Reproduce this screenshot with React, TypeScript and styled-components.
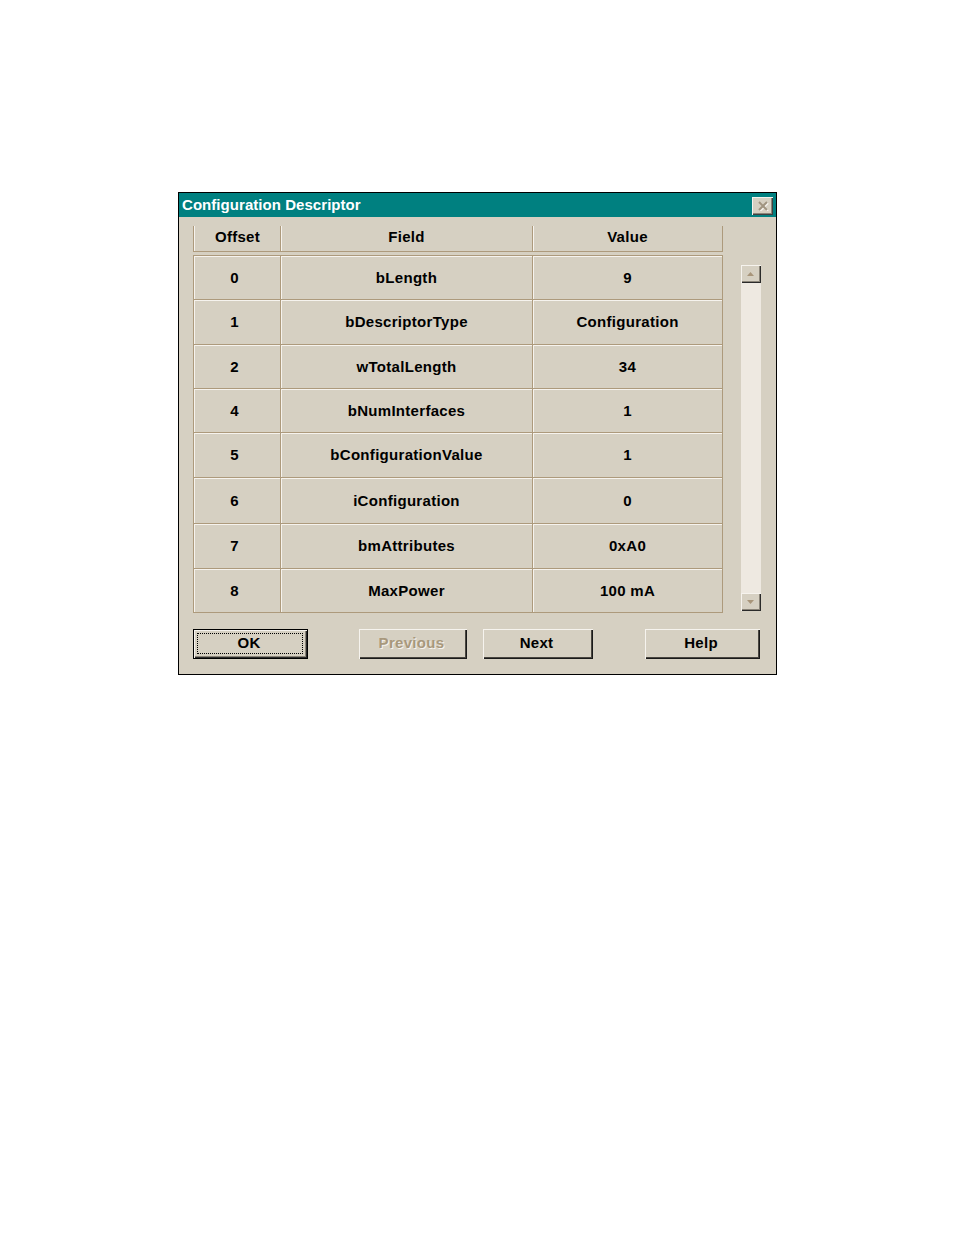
import React from "react";
import styled, { createGlobalStyle, css } from "styled-components";

const BG = "#d6d0c2";
const LIGHT = "#f6f3ee";
const GRID = "#ad9a7c";
const TEAL = "#008080";

const Global = createGlobalStyle`
  html, body { margin: 0; padding: 0; background: #ffffff; }
  body { font-family: "Liberation Sans", Arial, sans-serif; }
`;

const Page = styled.div`
  padding: 192px 0 0 178px;
  min-height: 1235px;
  box-sizing: border-box;
`;

const Dialog = styled.div`
  width: 599px;
  height: 483px;
  box-sizing: border-box;
  border: 1px solid #000;
  background: ${BG};
  display: flex;
  flex-direction: column;
  font: bold 15px "Liberation Sans", Arial, sans-serif;
  letter-spacing: 0.3px;
  color: #000;
`;

const TitleBar = styled.div`
  height: 24px;
  background: ${TEAL};
  color: #fff;
  display: flex;
  align-items: center;
  justify-content: space-between;
  padding: 0 3px 0 3px;
  box-sizing: border-box;
`;

const Title = styled.span`
  line-height: 1;
  letter-spacing: 0.05px;
  margin-top: -1px;
`;

const CloseBtn = styled.div`
  width: 21px;
  height: 18px;
  box-sizing: border-box;
  background: ${BG};
  box-shadow: inset 1px 1px 0 ${LIGHT}, inset -1px -1px 0 #404040, inset -2px -2px 0 #8a8478;
  display: flex;
  align-items: center;
  justify-content: center;
  margin-top: 1px;
`;

const Body = styled.div`
  flex: 1;
  padding: 9px 0 0 14px;
  display: flex;
  flex-direction: column;
`;

const Content = styled.div`
  display: flex;
  align-items: flex-start;
`;

const Table = styled.div`
  width: 530px;
  display: flex;
  flex-direction: column;
`;

const COLS = "87px 252px 190px";

const HeaderRow = styled.div`
  display: grid;
  grid-template-columns: ${COLS};
  height: 26px;
  border-left: 1px solid ${GRID};
  border-bottom: 1px solid ${GRID};
  box-sizing: border-box;
  margin-bottom: 3px;
`;

const HeaderCell = styled.div<{ $first?: boolean }>`
  display: flex;
  align-items: center;
  justify-content: center;
  border-right: 1px solid ${GRID};
  box-shadow: inset 1px 0 0 ${LIGHT};
  padding-bottom: 5px;
  padding-left: ${(p) => (p.$first ? "1px" : "0")};
`;

const Rows = styled.div`
  border-top: 1px solid ${GRID};
  border-left: 1px solid ${GRID};
  display: flex;
  flex-direction: column;
`;

const Row = styled.div<{ $h: number }>`
  display: grid;
  grid-template-columns: ${COLS};
  height: ${(p) => p.$h}px;
`;

const Cell = styled.div<{ $first?: boolean }>`
  display: flex;
  align-items: center;
  justify-content: center;
  border-right: 1px solid ${GRID};
  border-bottom: 1px solid ${GRID};
  box-shadow: inset 1px 1px 0 ${LIGHT};
  padding-right: ${(p) => (p.$first ? "5px" : "0")};
  padding-bottom: 1px;
`;

const Scrollbar = styled.div`
  margin-left: 18px;
  margin-top: 39px;
  width: 20px;
  height: 346px;
  background: #eee9e1;
  display: flex;
  flex-direction: column;
  justify-content: space-between;
`;

const ScrollBtn = styled.div`
  width: 20px;
  height: 18px;
  box-sizing: border-box;
  background: ${BG};
  box-shadow: inset 1px 1px 0 ${LIGHT}, inset -1px -1px 0 #2a2a2a, inset -2px -2px 0 #8a8478;
  display: flex;
  align-items: center;
  justify-content: center;
  padding: 0 1px 1px 0;
`;

const Buttons = styled.div`
  display: flex;
  margin-top: 16px;
  align-items: flex-start;
`;

const Button = styled.div<{ $w: number; $ml: number; $disabled?: boolean; $default?: boolean }>`
  width: ${(p) => p.$w}px;
  height: 30px;
  margin-left: ${(p) => p.$ml}px;
  box-sizing: border-box;
  background: ${BG};
  display: flex;
  align-items: center;
  justify-content: center;
  position: relative;
  color: ${(p) => (p.$disabled ? "#a8987c" : "#000")};
  text-shadow: ${(p) => (p.$disabled ? `1px 1px 0 ${LIGHT}` : "none")};
  padding: 0 3px 3px 0;
  ${(p) =>
    p.$default
      ? css`
          border: 1px solid #000;
          box-shadow: inset 1px 1px 0 ${LIGHT}, inset -1px -1px 0 #2a2a2a, inset -2px -2px 0 #8a8478;
        `
      : css`
          box-shadow: inset 1px 1px 0 ${LIGHT}, inset -1px -1px 0 #1a1a1a, inset -2px -2px 0 #4a4640;
        `}
`;

const Focus = styled.span`
  position: absolute;
  inset: 3px 4px 4px 3px;
  border: 1px dotted #000;
  pointer-events: none;
`;

const rows: { off: string; field: string; value: string; h: number }[] = [
  { off: "0", field: "bLength", value: "9", h: 44 },
  { off: "1", field: "bDescriptorType", value: "Configuration", h: 45 },
  { off: "2", field: "wTotalLength", value: "34", h: 44 },
  { off: "4", field: "bNumInterfaces", value: "1", h: 44 },
  { off: "5", field: "bConfigurationValue", value: "1", h: 45 },
  { off: "6", field: "iConfiguration", value: "0", h: 46 },
  { off: "7", field: "bmAttributes", value: "0xA0", h: 45 },
  { off: "8", field: "MaxPower", value: "100 mA", h: 44 },
];

const UpArrow = () => (
  <svg width="7" height="4" viewBox="0 0 7 4">
    <path d="M3.5 0 L7 4 L0 4 Z" fill="#a8957a" />
  </svg>
);

const DownArrow = () => (
  <svg width="7" height="4" viewBox="0 0 7 4">
    <path d="M0 0 L7 0 L3.5 4 Z" fill="#a8957a" />
  </svg>
);

const CloseGlyph = () => (
  <svg width="12" height="10" viewBox="0 0 12 10">
    <path d="M2 1 L10 9 M10 1 L2 9" stroke={LIGHT} strokeWidth="2" transform="translate(1 1)" />
    <path d="M2 1 L10 9 M10 1 L2 9" stroke="#a09480" strokeWidth="2" />
  </svg>
);

export default function App() {
  return (
    <>
      <Global />
      <Page>
        <Dialog>
          <TitleBar>
            <Title>Configuration Descriptor</Title>
            <CloseBtn>
              <CloseGlyph />
            </CloseBtn>
          </TitleBar>
          <Body>
            <Content>
              <Table>
                <HeaderRow>
                  <HeaderCell $first>Offset</HeaderCell>
                  <HeaderCell>Field</HeaderCell>
                  <HeaderCell>Value</HeaderCell>
                </HeaderRow>
                <Rows>
                  {rows.map((r) => (
                    <Row key={r.off} $h={r.h}>
                      <Cell $first>{r.off}</Cell>
                      <Cell>{r.field}</Cell>
                      <Cell>{r.value}</Cell>
                    </Row>
                  ))}
                </Rows>
              </Table>
              <Scrollbar>
                <ScrollBtn>
                  <UpArrow />
                </ScrollBtn>
                <ScrollBtn>
                  <DownArrow />
                </ScrollBtn>
              </Scrollbar>
            </Content>
            <Buttons>
              <Button $w={115} $ml={0} $default>
                <Focus />
                OK
              </Button>
              <Button $w={108} $ml={51} $disabled>
                Previous
              </Button>
              <Button $w={110} $ml={16}>
                Next
              </Button>
              <Button $w={115} $ml={52}>
                Help
              </Button>
            </Buttons>
          </Body>
        </Dialog>
      </Page>
    </>
  );
}
